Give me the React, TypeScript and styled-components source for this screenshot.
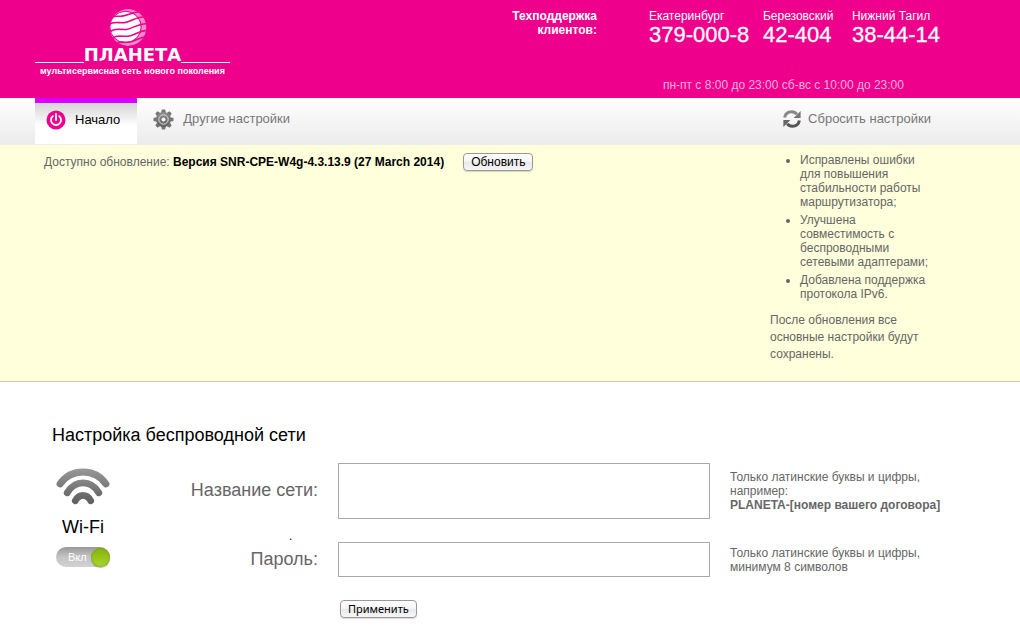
import React, { useState } from "react";
import styled, { createGlobalStyle } from "styled-components";

const GlobalStyle = createGlobalStyle`
  *, *::before, *::after { box-sizing: border-box; }
  body {
    margin: 0;
    background: #fff;
    color: #666;
    font-family: "Liberation Sans", Arial, sans-serif;
    font-size: 12px;
    line-height: 14px;
  }
`;

const Header = styled.header`
  display: flex;
  align-items: flex-start;
  min-height: 98px;
  padding: 9px 80px 0 35px;
  background: #ef008c;
  color: #fff;
`;

const Logo = styled.a`
  display: flex;
  flex-direction: column;
  align-items: center;
  width: 195px;
  color: #fff;
  text-decoration: none;
`;

const Globe = styled.svg`
  display: block;
  width: 40px;
  height: 38px;
  margin-right: 10px;
`;

const WordmarkRow = styled.span`
  display: flex;
  align-items: flex-end;
  align-self: stretch;
  height: 16px;

  &::before, &::after {
    content: "";
    flex: 1;
    border-bottom: 1px solid #fff;
  }
`;

const Wordmark = styled.span`
  font: bold 18px/16px "DejaVu Sans", sans-serif;
`;

const Tagline = styled.span`
  margin-top: 1px;
  font-size: 9px;
  line-height: 14px;
  font-weight: bold;
  white-space: nowrap;
`;

const Support = styled.section`
  display: flex;
  margin-left: auto;
`;

const SupportTitle = styled.h2`
  width: 100px;
  margin: 0 52px 0 0;
  font-size: 12px;
  line-height: 14px;
  text-align: right;
`;

const Phones = styled.dl`
  display: grid;
  grid-template-columns: 114px 89px auto;
  margin: 0;
`;

const Phone = styled.div`
  dt { line-height: 14px; }
  dd { margin: 0; font-size: 22px; line-height: 24px; -webkit-text-stroke: 0.3px #fff; }
`;

const Hours = styled.p`
  margin: 31px 0 0 14px;
  color: #fbb0dd;
`;

const Nav = styled.nav`
  display: flex;
  height: 47px;
  padding: 0 89px 0 35px;
  background: linear-gradient(#fff, #ebebeb);
`;

const NavItem = styled.a<{ $active?: boolean; $end?: boolean }>`
  display: flex;
  align-items: center;
  gap: ${(p) => (p.$end ? "7px" : "9px")};
  margin-left: ${(p) => (p.$end ? "auto" : "0")};
  padding: ${(p) => (p.$active ? "0 17px 7px 11px" : p.$end ? "0 0 5px" : "0 16px 5px")};
  border-top: ${(p) => (p.$active ? "5px solid #d800ff" : "0")};
  height: ${(p) => (p.$active ? "46px" : "47px")};
  background: ${(p) => (p.$active ? "linear-gradient(#d4d4d4, #fff 55%)" : "none")};
  color: ${(p) => (p.$active ? "#000" : "#777")};
  font-size: 13px;
  text-decoration: none;
`;

const UpdatePanel = styled.section`
  display: flex;
  justify-content: space-between;
  align-items: flex-start;
  padding: 8px 85px 18px 44px;
  border-bottom: 1px solid #cccab4;
  background: #ffffdb;
`;

const UpdateLine = styled.div`
  display: flex;
  align-items: center;
  gap: 19px;

  p { margin: 0; }
  strong { color: #000; }
`;

const PushButton = styled.button<{ $compact?: boolean }>`
  height: 18px;
  padding: 0 7px;
  border: 1px solid #999;
  border-radius: 4px;
  background: linear-gradient(#fff, #f4f4f4 50%, #e9e9e9 50%, #f6f6f6);
  box-shadow: 0 1px 1px rgba(0, 0, 0, 0.15);
  color: #000;
  font: ${(p) => (p.$compact ? '11px/14px "Noto Sans"' : '12px/14px "Liberation Sans"')}, sans-serif;
`;

const Notes = styled.aside`
  width: 165px;

  ul { margin: 0; padding: 0 0 0 30px; }
  li + li { margin-top: 4px; }
  p { margin: 11px 0 0; line-height: 17px; }
`;

const Main = styled.main`
  padding: 42px 70px 26px 52px;
`;

const Title = styled.h1`
  margin: 0 0 17px;
  color: #000;
  font-size: 18px;
  font-weight: normal;
  line-height: 22px;
`;

const Settings = styled.div`
  display: flex;
  gap: 8px;
`;

const WifiColumn = styled.section`
  display: flex;
  flex-direction: column;
  align-items: center;
  width: 62px;
  padding-top: 5px;
`;

const WifiName = styled.h2`
  margin: 12px 0 10px;
  color: #000;
  font-size: 18px;
  font-weight: normal;
  line-height: 20px;
`;

const Switch = styled.label<{ $on: boolean }>`
  position: relative;
  display: flex;
  align-items: center;
  justify-content: space-between;
  flex-direction: ${(p) => (p.$on ? "row" : "row-reverse")};
  width: 54px;
  height: 20px;
  padding-left: ${(p) => (p.$on ? "12px" : "0")};
  border-radius: 10px;
  background: linear-gradient(#999, #c4c4c4 50%, #d2d2d2);
  color: #fff;
  font-size: 11px;

  input { position: absolute; inset: 0; margin: 0; opacity: 0; }
`;

const Knob = styled.span`
  width: 19px;
  height: 19px;
  border-radius: 50%;
  background: linear-gradient(#86b010, #a8d828);
  box-shadow: 0 1px 1px rgba(0, 0, 0, 0.3), inset 0 0 2px #6c9400;
`;

const Form = styled.form`
  flex: 1;
  display: grid;
  grid-template-columns: 196px minmax(200px, 1fr) 220px;
  column-gap: 20px;
`;

const Label = styled.label`
  align-self: center;
  padding-bottom: 2px;
  font-size: 18px;
  line-height: 20px;
  text-align: right;
`;

const Dot = styled.span`
  grid-column: 1 / -1;
  height: 23px;
  padding: 12px 0 0 167px;
  line-height: 11px;
  color: #000;
`;

const Field = styled.input<{ $tall?: boolean }>`
  width: 100%;
  height: ${(p) => (p.$tall ? "56px" : "35px")};
  padding: 0 10px;
  border: 1px solid #aaa;
  background: #fff;
  font: 18px "Liberation Sans", sans-serif;
`;

const Hint = styled.p`
  align-self: center;
  margin: 0;

  strong { display: block; white-space: nowrap; }
`;

const Actions = styled.div`
  grid-column: 2;
  padding: 23px 0 0 2px;
`;

const PowerIcon = () => (
  <svg width="20" height="20" viewBox="0 0 20 20" fill="none" strokeLinecap="round">
    <circle cx="10" cy="10" r="9.5" fill="#ef008c" />
    <path d="M6.8 6.2a5 5 0 1 0 6.4 0" stroke="#fff" strokeWidth="1.8" />
    <path d="M10 4v6" stroke="#fff" strokeWidth="1.8" />
  </svg>
);

const GearIcon = () => (
  <svg width="21" height="21" viewBox="0 0 21 21">
    <defs>
      <linearGradient id="gear" gradientUnits="userSpaceOnUse" x1="0" y1="0" x2="0" y2="21">
        <stop offset="0" stopColor="#999" />
        <stop offset="1" stopColor="#555" />
      </linearGradient>
    </defs>
    <g fill="#777">
      {[0, 45, 90, 135, 180, 225, 270, 315].map((a) => (
        <path key={a} d="M7.9 4.5 8.9.5h3.2l1 4z" transform={`rotate(${a} 10.5 10.5)`} />
      ))}
    </g>
    <circle cx="10.5" cy="10.5" r="7.4" fill="url(#gear)" />
    <circle cx="10.5" cy="10.5" r="4.7" fill="none" stroke="#ddd" strokeWidth="1" />
    <circle cx="10.5" cy="10.5" r="2" fill="#f4f4f4" />
  </svg>
);

const ResetIcon = () => (
  <svg width="18" height="18" viewBox="0 0 18 18" fill="none">
    <path d="M1.6 7.5C2.4 3.7 5.2 1.8 8.6 1.8c2.3 0 4 .9 5.2 2.4" stroke="#888" strokeWidth="3" />
    <path d="M17.6 1v7h-7z" fill="#777" />
    <path d="M16.4 10.5c-.8 3.8-3.6 5.7-7 5.7-2.3 0-4-.9-5.2-2.4" stroke="#555" strokeWidth="3" />
    <path d="M.4 17v-7h7z" fill="#666" />
  </svg>
);

const WifiIcon = () => (
  <svg width="54" height="37" viewBox="0 0 54 37" fill="none" strokeLinecap="round">
    <defs>
      <linearGradient id="wifi" gradientUnits="userSpaceOnUse" x1="0" y1="0" x2="0" y2="37">
        <stop offset="0" stopColor="#999" />
        <stop offset="1" stopColor="#5c5c5c" />
      </linearGradient>
    </defs>
    <g stroke="url(#wifi)" strokeWidth="6.8">
      <path d="M4 16C15 0 39 0 50 16" />
      <path d="M11.2 24.7C19 11.5 35 11.5 42.8 24.7" />
      <path d="M19.3 32.7C23 25.5 31 25.5 34.7 32.7" />
    </g>
  </svg>
);

const phones = [
  { city: "Екатеринбург", number: "379-000-8" },
  { city: "Березовский", number: "42-404" },
  { city: "Нижний Тагил", number: "38-44-14" },
];

const notes = [
  "Исправлены ошибки для повышения стабильности работы маршрутизатора;",
  "Улучшена совместимость с беспроводными сетевыми адаптерами;",
  "Добавлена поддержка протокола IPv6.",
];

export default function App() {
  const [wifi, setWifi] = useState(true);

  return (
    <>
      <GlobalStyle />
      <Header>
        <Logo href="#">
          <Globe viewBox="0 0 40 38">
            <defs>
              <clipPath id="globe"><circle cx="20" cy="18.5" r="18.5" /></clipPath>
            </defs>
            <g clipPath="url(#globe)">
              <circle cx="20" cy="18.5" r="18.5" fill="#f78bc9" />
              <circle cx="17.5" cy="18" r="15.2" fill="#fff" />
              <circle cx="17.5" cy="18" r="15.7" fill="none" stroke="#ef008c" strokeWidth="1" />
              <g fill="none" stroke="#ef008c" strokeWidth="1.6" transform="rotate(-14 20 18.5)">
                <path d="M-2 7c8-5 12-2 19-1s13-2 25 1" />
                <path d="M-2 14c8-7 13-2 20-1s13-4 24 0" />
                <path d="M-2 21c8-7 13-2 20-1s13-4 24 0" />
                <path d="M-2 28c8-7 13-2 20-1s13-4 24 0" />
                <path d="M-2 34c8-6 13-2 20-1s13-4 24 0" />
              </g>
            </g>
          </Globe>
          <WordmarkRow><Wordmark>ПЛАНЕТА</Wordmark></WordmarkRow>
          <Tagline>мультисервисная сеть нового поколения</Tagline>
        </Logo>
        <Support>
          <SupportTitle>Техподдержка клиентов:</SupportTitle>
          <div>
            <Phones>
              {phones.map((p) => (
                <Phone key={p.city}>
                  <dt>{p.city}</dt>
                  <dd>{p.number}</dd>
                </Phone>
              ))}
            </Phones>
            <Hours>пн-пт с 8:00 до 23:00 сб-вс с 10:00 до 23:00</Hours>
          </div>
        </Support>
      </Header>
      <Nav>
        <NavItem href="#" $active><PowerIcon />Начало</NavItem>
        <NavItem href="#"><GearIcon />Другие настройки</NavItem>
        <NavItem href="#" $end><ResetIcon />Сбросить настройки</NavItem>
      </Nav>
      <UpdatePanel>
        <UpdateLine>
          <p>Доступно обновление: <strong>Версия SNR-CPE-W4g-4.3.13.9 (27 March 2014)</strong></p>
          <PushButton type="button">Обновить</PushButton>
        </UpdateLine>
        <Notes>
          <ul>{notes.map((n) => <li key={n}>{n}</li>)}</ul>
          <p>После обновления все основные настройки будут сохранены.</p>
        </Notes>
      </UpdatePanel>
      <Main>
        <Title>Настройка беспроводной сети</Title>
        <Settings>
          <WifiColumn>
            <WifiIcon />
            <WifiName>Wi-Fi</WifiName>
            <Switch $on={wifi}>
              <input
                type="checkbox"
                aria-label="Wi-Fi"
                checked={wifi}
                onChange={(e) => setWifi(e.target.checked)}
              />
              {wifi ? "Вкл" : ""}
              <Knob />
            </Switch>
          </WifiColumn>
          <Form onSubmit={(e) => e.preventDefault()}>
            <Label htmlFor="ssid">Название сети:</Label>
            <Field id="ssid" type="text" $tall />
            <Hint>
              Только латинские буквы и цифры, например:
              <strong>PLANETA-[номер вашего договора]</strong>
            </Hint>
            <Dot>.</Dot>
            <Label htmlFor="password">Пароль:</Label>
            <Field id="password" type="password" />
            <Hint>Только латинские буквы и цифры, минимум 8 символов</Hint>
            <Actions><PushButton $compact>Применить</PushButton></Actions>
          </Form>
        </Settings>
      </Main>
    </>
  );
}
